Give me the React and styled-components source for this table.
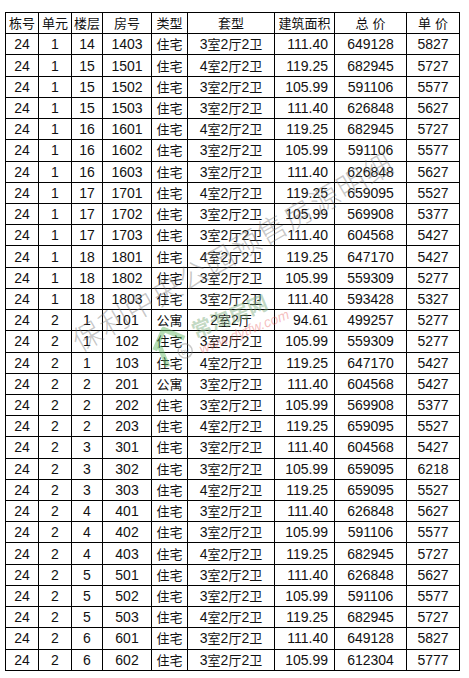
import React from "react";
import styled, { createGlobalStyle } from "styled-components";

const Global = createGlobalStyle`
  html, body { margin: 0; padding: 0; background: #fff; }
  body { font-family: "Liberation Sans", "Noto Sans CJK SC", sans-serif; }
`;

const Page = styled.div`
  position: relative;
  width: 469px;
  height: 678px;
  padding: 12px 0 0 5px;
  box-sizing: border-box;
  overflow: hidden;
`;

const Grid = styled.div`
  display: grid;
  grid-template-columns: 33px 33px 31px 49px 36px 87px 60px 72px 53px;
  grid-auto-rows: 21.23px;
  width: 455px;
  border-left: 1px solid #000;
  border-top: 1px solid #000;
  box-sizing: border-box;
`;

const Cell = styled.div`
  box-sizing: border-box;
  border-right: 1px solid #000;
  border-bottom: 1px solid #000;
  display: flex;
  align-items: center;
  justify-content: ${(p) => (p.$align === "right" ? "flex-end" : "center")};
  padding-right: ${(p) => (p.$align === "right" ? "6px" : "0")};
  font-size: 14px;
  line-height: 1;
  color: #111;
  white-space: pre;
  overflow: hidden;
`;

const Text = styled.span`
  white-space: pre;
`;

const Han = styled.span`
  font-family: "Noto Sans CJK SC", sans-serif;
  font-size: 13px;
`;

const Watermark = styled.div`
  position: absolute;
  left: 232px;
  top: 250px;
  transform: translate(-50%, -50%) rotate(-30deg);
  font-family: "Noto Sans CJK SC", sans-serif;
  font-weight: 300;
  font-size: 29px;
  letter-spacing: 1.5px;
  color: rgba(110, 110, 110, 0.4);
  white-space: nowrap;
  pointer-events: none;
`;

const Logo = styled.div`
  position: absolute;
  left: 160px;
  top: 326px;
  display: flex;
  align-items: flex-end;
  gap: 2px;
  transform: rotate(-22deg);
  transform-origin: left bottom;
  pointer-events: none;
`;

const LogoText = styled.div`
  display: flex;
  flex-direction: column;
  align-items: flex-start;
`;

const LogoName = styled.div`
  font-family: "Noto Sans CJK SC", sans-serif;
  font-weight: 700;
  font-size: 20px;
  line-height: 24px;
  color: rgba(120, 170, 120, 0.45);
  white-space: nowrap;
`;

const LogoUrl = styled.div`
  font-family: "Liberation Sans", sans-serif;
  font-size: 14px;
  line-height: 16px;
  font-style: italic;
  color: rgba(230, 90, 90, 0.4);
  white-space: nowrap;
`;

const headers = ["栋号", "单元", "楼层", "房号", "类型", "套型", "建筑面积", "总 价", "单 价"];

const rows = [
  [24, 1, 14, 1403, "住宅", "3室2厅2卫", "111.40", 649128, 5827],
  [24, 1, 15, 1501, "住宅", "4室2厅2卫", "119.25", 682945, 5727],
  [24, 1, 15, 1502, "住宅", "3室2厅2卫", "105.99", 591106, 5577],
  [24, 1, 15, 1503, "住宅", "3室2厅2卫", "111.40", 626848, 5627],
  [24, 1, 16, 1601, "住宅", "4室2厅2卫", "119.25", 682945, 5727],
  [24, 1, 16, 1602, "住宅", "3室2厅2卫", "105.99", 591106, 5577],
  [24, 1, 16, 1603, "住宅", "3室2厅2卫", "111.40", 626848, 5627],
  [24, 1, 17, 1701, "住宅", "4室2厅2卫", "119.25", 659095, 5527],
  [24, 1, 17, 1702, "住宅", "3室2厅2卫", "105.99", 569908, 5377],
  [24, 1, 17, 1703, "住宅", "3室2厅2卫", "111.40", 604568, 5427],
  [24, 1, 18, 1801, "住宅", "4室2厅2卫", "119.25", 647170, 5427],
  [24, 1, 18, 1802, "住宅", "3室2厅2卫", "105.99", 559309, 5277],
  [24, 1, 18, 1803, "住宅", "3室2厅2卫", "111.40", 593428, 5327],
  [24, 2, 1, 101, "公寓", "2室2厅", "94.61", 499257, 5277],
  [24, 2, 1, 102, "住宅", "3室2厅2卫", "105.99", 559309, 5277],
  [24, 2, 1, 103, "住宅", "4室2厅2卫", "119.25", 647170, 5427],
  [24, 2, 2, 201, "公寓", "3室2厅2卫", "111.40", 604568, 5427],
  [24, 2, 2, 202, "住宅", "3室2厅2卫", "105.99", 569908, 5377],
  [24, 2, 2, 203, "住宅", "4室2厅2卫", "119.25", 659095, 5527],
  [24, 2, 3, 301, "住宅", "3室2厅2卫", "111.40", 604568, 5427],
  [24, 2, 3, 302, "住宅", "3室2厅2卫", "105.99", 659095, 6218],
  [24, 2, 3, 303, "住宅", "4室2厅2卫", "119.25", 659095, 5527],
  [24, 2, 4, 401, "住宅", "3室2厅2卫", "111.40", 626848, 5627],
  [24, 2, 4, 402, "住宅", "3室2厅2卫", "105.99", 591106, 5577],
  [24, 2, 4, 403, "住宅", "4室2厅2卫", "119.25", 682945, 5727],
  [24, 2, 5, 501, "住宅", "3室2厅2卫", "111.40", 626848, 5627],
  [24, 2, 5, 502, "住宅", "3室2厅2卫", "105.99", 591106, 5577],
  [24, 2, 5, 503, "住宅", "4室2厅2卫", "119.25", 682945, 5727],
  [24, 2, 6, 601, "住宅", "3室2厅2卫", "111.40", 649128, 5827],
  [24, 2, 6, 602, "住宅", "3室2厅2卫", "105.99", 612304, 5777],
];

function Mixed({ text }) {
  const parts = String(text).split(/([\u4e00-\u9fff]+)/);
  return (
    <Text>
      {parts.map((p, i) =>
        /[\u4e00-\u9fff]/.test(p) ? <Han key={i}>{p}</Han> : <React.Fragment key={i}>{p}</React.Fragment>
      )}
    </Text>
  );
}

export default function App() {
  return (
    <Page>
      <Global />
      <Grid>
        {headers.map((h, i) => (
          <Cell key={"h" + i}>
            <Mixed text={h} />
          </Cell>
        ))}
        {rows.map((r, ri) =>
          r.map((v, ci) => (
            <Cell key={ri + "-" + ci} $align={ci === 6 ? "right" : "center"}>
              <Mixed text={v} />
            </Cell>
          ))
        )}
      </Grid>
      <Watermark>保利中央公园预售房源明细</Watermark>
      <Logo>
        <svg width="44" height="48" viewBox="0 0 44 48">
          <g fill="none" stroke="rgba(90,180,90,0.45)" strokeWidth="5" strokeLinejoin="round">
            <path d="M4 24 L20 8 L36 24" />
            <path d="M10 22 L10 44" />
          </g>
          <circle cx="32" cy="36" r="7" fill="none" stroke="rgba(120,120,120,0.4)" strokeWidth="1.5" />
          <text x="27.5" y="39" fontSize="8" fill="rgba(120,120,120,0.5)" fontFamily="Liberation Sans">by</text>
        </svg>
        <LogoText>
          <LogoName>常淘房网</LogoName>
          <LogoUrl>www.dytfw.com</LogoUrl>
        </LogoText>
      </Logo>
    </Page>
  );
}
